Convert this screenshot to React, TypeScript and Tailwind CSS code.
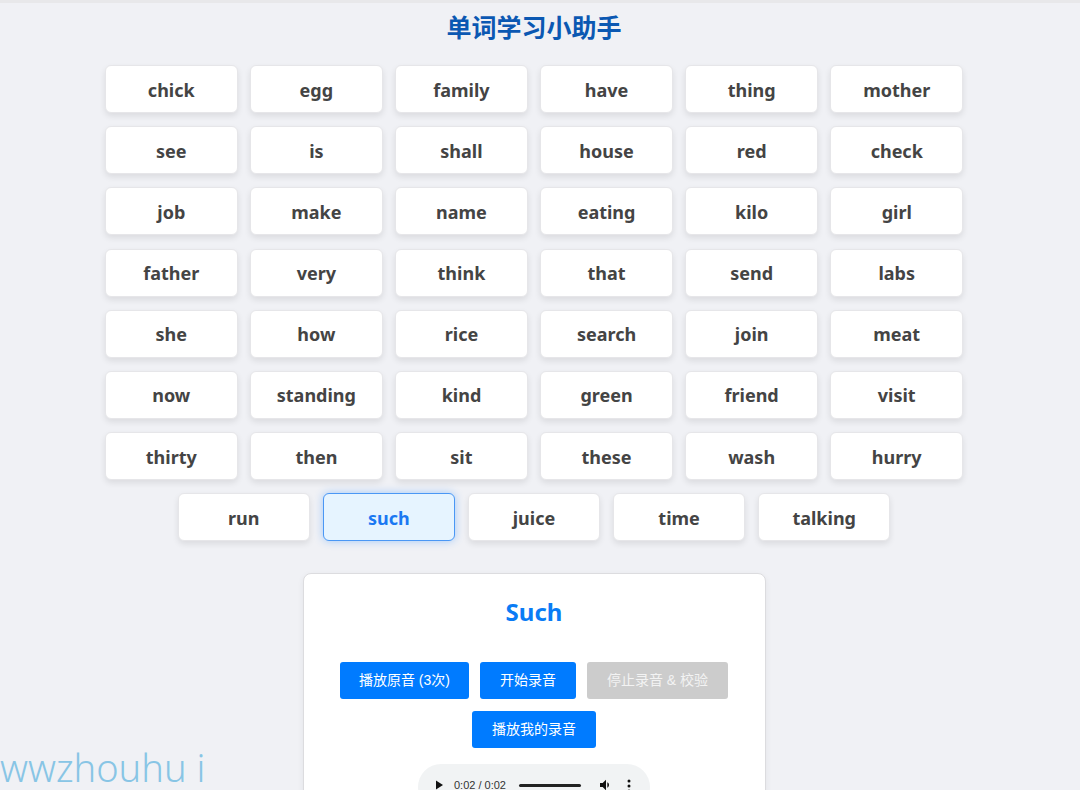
import React from "react";

const words = [
  "chick","egg","family","have","thing","mother",
  "see","is","shall","house","red","check",
  "job","make","name","eating","kilo","girl",
  "father","very","think","that","send","labs",
  "she","how","rice","search","join","meat",
  "now","standing","kind","green","friend","visit",
  "thirty","then","sit","these","wash","hurry",
  "run","such","juice","time","talking",
];

export default function App() {
  return (
    <div className="relative w-[1080px] h-[790px] overflow-hidden bg-[#f0f1f5]" style={{ fontFamily: '"Noto Sans", "Noto Sans CJK SC", sans-serif' }}>
      <div className="h-[3px] bg-[#e8e8ea]" />
      <div className="w-[1068px] flex flex-col items-center">
        <h1 className="mt-[8px] h-[30px] leading-[30px] text-[25px] font-bold text-[#0b58b2]" style={{ fontFamily: '"Noto Sans CJK SC", sans-serif' }}>单词学习小助手</h1>
        <div className="mt-[24px] w-[870px] flex flex-wrap justify-center gap-x-[12.6px] gap-y-[13.2px]">
          {words.map((w) => {
            const active = w === "such";
            return (
              <div
                key={w}
                className={
                  active
                    ? "w-[132.5px] h-[48px] pt-[2px] flex items-center justify-center rounded-[6px] border border-[#4a97f5] bg-[#e6f4ff] text-[#1a78f2] text-[18px] font-bold shadow-[0_0_8px_rgba(64,150,255,0.45)]"
                    : "w-[132.5px] h-[48px] pt-[2px] flex items-center justify-center rounded-[6px] border border-[#e6e6e9] bg-white text-[#444] text-[18px] font-bold shadow-[0_3px_6px_rgba(0,0,0,0.09)]"
                }
              >
                {w}
              </div>
            );
          })}
        </div>
        <div className="mt-[32px] w-[463px] h-[260px] rounded-[8px] border border-[#dcdcdf] bg-white shadow-[0_2px_6px_rgba(0,0,0,0.06)] flex flex-col items-center">
          <div className="mt-[22px] h-[32px] leading-[32px] text-[24px] font-bold text-[#0a7cf5]">Such</div>
          <div className="mt-[34px] flex flex-wrap justify-center gap-x-[11px] gap-y-[12px] w-[400px]">
            <div className="h-[37px] px-[19px] flex items-center rounded-[3px] bg-[#007bff] text-white text-[14px]" style={{ fontFamily: '"Liberation Sans", "Noto Sans CJK SC", sans-serif' }}>播放原音 (3次)</div>
            <div className="h-[37px] px-[20px] flex items-center rounded-[3px] bg-[#007bff] text-white text-[14px]" style={{ fontFamily: '"Liberation Sans", "Noto Sans CJK SC", sans-serif' }}>开始录音</div>
            <div className="h-[37px] px-[20px] flex items-center rounded-[3px] bg-[#cccccc] text-[#f3f3f3] text-[14px]" style={{ fontFamily: '"Liberation Sans", "Noto Sans CJK SC", sans-serif' }}>停止录音 &amp; 校验</div>
            <div className="h-[37px] px-[20px] flex items-center rounded-[3px] bg-[#007bff] text-white text-[14px]" style={{ fontFamily: '"Liberation Sans", "Noto Sans CJK SC", sans-serif' }}>播放我的录音</div>
          </div>
          <div className="mt-[16px] w-[232px] h-[46px] rounded-full bg-[#f1f3f4] flex items-start pt-[13px] pl-[14px] text-[#222]" style={{ fontFamily: '"Liberation Sans", sans-serif' }}>
            <svg width="14" height="14" viewBox="0 0 14 14" className="mt-[1px]"><path d="M4 2.5 L11 7 L4 11.5 Z" fill="#111" /></svg>
            <span className="ml-[8px] text-[11px] leading-[16px] text-[#333]">0:02 / 0:02</span>
            <div className="ml-[13px] mt-[7px] w-[62px] h-[3px] rounded-full bg-[#222]" />
            <svg width="16" height="16" viewBox="0 0 24 24" className="ml-[17px] mt-[0px]"><path d="M3 9v6h4l5 5V4L7 9H3z" fill="#111" /><path d="M16.5 12c0-1.8-1-3.3-2.5-4v8c1.5-.7 2.5-2.2 2.5-4z" fill="#111" /></svg>
            <svg width="4" height="14" viewBox="0 0 4 14" className="ml-[13px] mt-[2px]"><circle cx="2" cy="2" r="1.5" fill="#111" /><circle cx="2" cy="7" r="1.5" fill="#111" /><circle cx="2" cy="12" r="1.5" fill="#111" /></svg>
          </div>
        </div>
      </div>
      <div className="absolute left-0 top-[745px] text-[38px] font-light text-[#88c5e5] leading-[44px]" style={{ fontFamily: '"Noto Sans", sans-serif' }}>wwzhouhu i</div>
    </div>
  );
}
